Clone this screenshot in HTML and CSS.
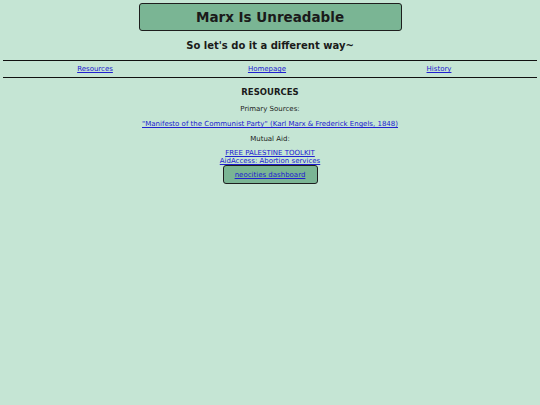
FILE: index.html
```html
<!DOCTYPE html>
<html>
<head>
<meta charset="utf-8">
<link rel="stylesheet" href="styles.css">
</head>
<body>
<header class="header">
  <h1 class="title">Marx Is Unreadable</h1>
  <h2 class="subtitle">So let's do it a different way~</h2>
</header>
<nav class="nav">
  <a href="#">Resources</a>
  <a href="#">Homepage</a>
  <a href="#">History</a>
</nav>
<main class="content">
  <h3 class="section-title">RESOURCES</h3>
  <p class="label">Primary Sources:</p>
  <p class="item"><a href="#">"Manifesto of the Communist Party" (Karl Marx &amp; Frederick Engels, 1848)</a></p>
  <p class="label label-tight">Mutual Aid:</p>
  <div class="stack">
    <a href="#">FREE PALESTINE TOOLKIT</a>
    <a href="#">AidAccess: Abortion services</a>
  </div>
  <div class="button"><a href="#">neocities dashboard</a></div>
</main>
</body>
</html>
```
FILE: styles.css
```css
html, body {
  margin: 0;
  padding: 0;
}
body {
  background: #c5e5d4;
  font-family: "DejaVu Sans", Verdana, sans-serif;
  color: #1a1a1a;
  padding: 3px 3px 0 3px;
}
a {
  color: #2020d0;
}
.header {
  display: flex;
  flex-direction: column;
  align-items: center;
}
.title {
  margin: 0;
  width: 261px;
  height: 26px;
  box-sizing: content-box;
  background: #7ab594;
  border: 1.5px solid #1e1e1e;
  border-radius: 3px;
  font-size: 13.5px;
  line-height: 26px;
  text-align: center;
  font-weight: bold;
}
.subtitle {
  margin: 7px 0 0;
  font-size: 10px;
  line-height: 16px;
  font-weight: bold;
}
.nav {
  margin-top: 6px;
  border-top: 1.5px solid #111;
  border-bottom: 1.5px solid #111;
  display: grid;
  grid-template-columns: 1fr 1fr 1fr;
  padding: 0 12px 0 6px;
  height: 16px;
  align-items: center;
  justify-items: center;
  font-size: 7px;
}
.content {
  display: flex;
  flex-direction: column;
  align-items: center;
  font-size: 7px;
}
.section-title {
  margin: 8px 0 0;
  font-size: 8.5px;
  line-height: 12px;
  font-weight: bold;
}
.label {
  margin: 6px 0 0;
  line-height: 10px;
}
.label-tight {
  margin-top: 5px;
}
.item {
  margin: 5px 0 0;
  line-height: 10px;
}
.stack {
  margin-top: 5px;
  display: flex;
  flex-direction: column;
  align-items: center;
  line-height: 8px;
}
.button {
  margin-top: 0;
  width: 93px;
  height: 17px;
  background: #7ab594;
  border: 1.5px solid #1e1e1e;
  border-radius: 3px;
  display: flex;
  align-items: center;
  justify-content: center;
}
```
